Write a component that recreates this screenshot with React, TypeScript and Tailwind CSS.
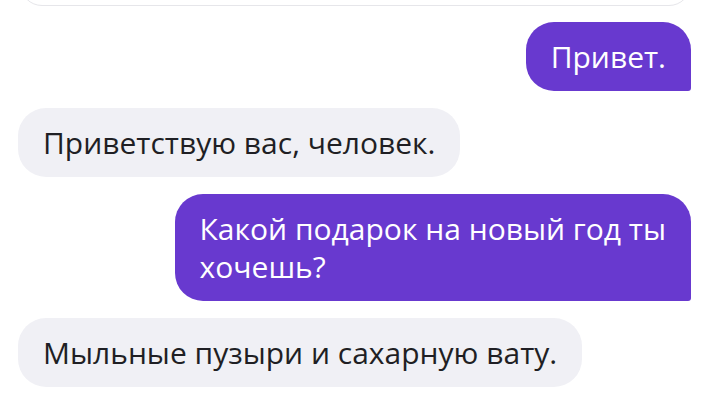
import React from 'react';

type Msg = { from: 'me' | 'bot'; text: React.ReactNode };

const messages: Msg[] = [
  { from: 'me', text: 'Привет.' },
  { from: 'bot', text: 'Приветствую вас, человек.' },
  { from: 'me', text: <>Какой подарок на новый год ты<br />хочешь?</> },
  { from: 'bot', text: 'Мыльные пузыри и сахарную вату.' },
];

export default function App() {
  return (
    <div className="w-[711px] h-[408px] overflow-hidden bg-white font-['Open_Sans',Arial,sans-serif]">
      {/* tail of the previous card, scrolled mostly out of view */}
      <div className="mx-[20px] -mt-[40px] h-[46px] rounded-b-[22px] border-[1.5px] border-[#e6e6ea] bg-white" />

      <div className="flex flex-col gap-[17px] pt-[16px] pl-[18px] pr-[20px]">
        {messages.map((m, i) => (
          <Bubble key={i} {...m} />
        ))}
      </div>
    </div>
  );
}

function Bubble({ from, text }: Msg) {
  if (from === 'me') {
    return (
      <div className="flex justify-end">
        <div className="rounded-[28px] rounded-br-[3px] bg-[#6839cf] pl-[25px] pr-[25px] pt-[16px] pb-[15px] text-[30px] leading-[38px] text-white">
          {text}
        </div>
      </div>
    );
  }
  return (
    <div className="flex justify-start">
      <div className="rounded-[28px] bg-[#f0f0f5] pl-[25px] pr-[25px] pt-[16px] pb-[15px] text-[30px] leading-[38px] text-[#1f1f24]">
        {text}
      </div>
    </div>
  );
}
